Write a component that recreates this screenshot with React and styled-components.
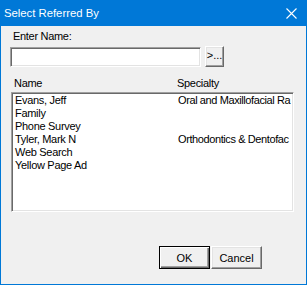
import React from "react";
import styled, { createGlobalStyle } from "styled-components";

const referrals = [
  { name: "Evans, Jeff", specialty: "Oral and Maxillofacial Ra" },
  { name: "Family", specialty: "" },
  { name: "Phone Survey", specialty: "" },
  { name: "Tyler, Mark N", specialty: "Orthodontics & Dentofac" },
  { name: "Web Search", specialty: "" },
  { name: "Yellow Page Ad", specialty: "" },
];

export default function App() {
  return (
    <>
      <GlobalStyle />
      <Window>
        <TitleBar>
          <Title>Select Referred By</Title>
          <CloseIcon width="11" height="11" viewBox="0 0 11 11">
            <path d="M0.5 0.5 L10.5 10.5 M10.5 0.5 L0.5 10.5" stroke="#fff" strokeWidth="1.1" />
          </CloseIcon>
        </TitleBar>
        <Body>
          <Label>Enter Name:</Label>
          <InputRow>
            <NameInput />
            <BrowseButton>&gt;...</BrowseButton>
          </InputRow>
          <ListHeader>
            <NameCol>Name</NameCol>
            <span>Specialty</span>
          </ListHeader>
          <ListBox>
            {referrals.map((r) => (
              <ListRow key={r.name}>
                <NameCol>{r.name}</NameCol>
                <SpecialtyCol>{r.specialty}</SpecialtyCol>
              </ListRow>
            ))}
          </ListBox>
          <ButtonRow>
            <DialogButton $default>OK</DialogButton>
            <DialogButton>Cancel</DialogButton>
          </ButtonRow>
        </Body>
      </Window>
    </>
  );
}

const GlobalStyle = createGlobalStyle`
  html, body {
    margin: 0;
    padding: 0;
    background: #f0f0f0;
  }
  * {
    box-sizing: border-box;
  }
`;

const Window = styled.div`
  width: 307px;
  height: 285px;
  border: 1px solid #0078d7;
  background: #f0f0f0;
  display: flex;
  flex-direction: column;
  font-family: "Liberation Sans", Arial, sans-serif;
  font-size: 11px;
  letter-spacing: -0.3px;
  color: #000;
`;

const TitleBar = styled.div`
  height: 25px;
  background: #0078d7;
  display: flex;
  align-items: center;
  justify-content: space-between;
  padding: 0 9px 1px 3px;
`;

const Title = styled.span`
  color: #fff;
  font-size: 11.3px;
  letter-spacing: 0;
`;

const CloseIcon = styled.svg`
  display: block;
  margin-top: 1px;
`;

const Body = styled.div`
  flex: 1;
  display: flex;
  flex-direction: column;
  padding: 4px 0 15px 9px;
`;

const Label = styled.div`
  line-height: 13px;
  margin-left: 3px;
`;

const InputRow = styled.div`
  display: flex;
  align-items: flex-start;
  gap: 4px;
  margin-top: 3px;
`;

const NameInput = styled.input`
  width: 191px;
  height: 20px;
  margin: 1px 0 0;
  background: #fff;
  border: 1px solid;
  border-color: #a0a0a0 #fff #fff #a0a0a0;
  box-shadow: inset 1px 1px 0 #696969, inset -1px -1px 0 #e3e3e3;
  outline: none;
  padding: 0 3px;
  font: inherit;
`;

const BrowseButton = styled.button`
  width: 19px;
  height: 21px;
  padding: 0 0 2px;
  background: #f0f0f0;
  border: 1px solid;
  border-color: #fff #696969 #696969 #fff;
  box-shadow: inset -1px -1px 0 #a0a0a0, inset 1px 1px 0 #e3e3e3;
  font: inherit;
  color: #000;
  line-height: 13px;
`;

const ListHeader = styled.div`
  display: flex;
  line-height: 13px;
  margin-top: 10px;
  padding-left: 4px;
`;

const NameCol = styled.span`
  width: 163px;
  flex-shrink: 0;
  white-space: nowrap;
`;

const SpecialtyCol = styled.span`
  white-space: nowrap;
  letter-spacing: -0.4px;
`;

const ListBox = styled.div`
  width: 283px;
  height: 120px;
  margin: 2px 0 0 1px;
  background: #fff;
  border: 1px solid;
  border-color: #a0a0a0 #fff #fff #a0a0a0;
  box-shadow: inset 1px 1px 0 #696969, inset -1px -1px 0 #e3e3e3;
  padding: 1px 2px 0 2px;
  overflow: hidden;
`;

const ListRow = styled.div`
  display: flex;
  line-height: 13px;
  padding-left: 1px;
  overflow: hidden;
`;

const ButtonRow = styled.div`
  margin-top: auto;
  display: flex;
  justify-content: flex-end;
  gap: 1px;
  padding-right: 44px;
`;

const DialogButton = styled.button`
  width: 51px;
  height: 23px;
  padding: 0;
  background: #f0f0f0;
  font: inherit;
  color: #000;
  border: 1px solid;
  border-color: ${(p) => (p.$default ? "#000" : "#fff #696969 #696969 #fff")};
  box-shadow: ${(p) =>
    p.$default
      ? "inset 1px 1px 0 #fff, inset -1px -1px 0 #696969, inset -2px -2px 0 #a0a0a0"
      : "inset -1px -1px 0 #a0a0a0, inset 1px 1px 0 #e3e3e3"};
`;
